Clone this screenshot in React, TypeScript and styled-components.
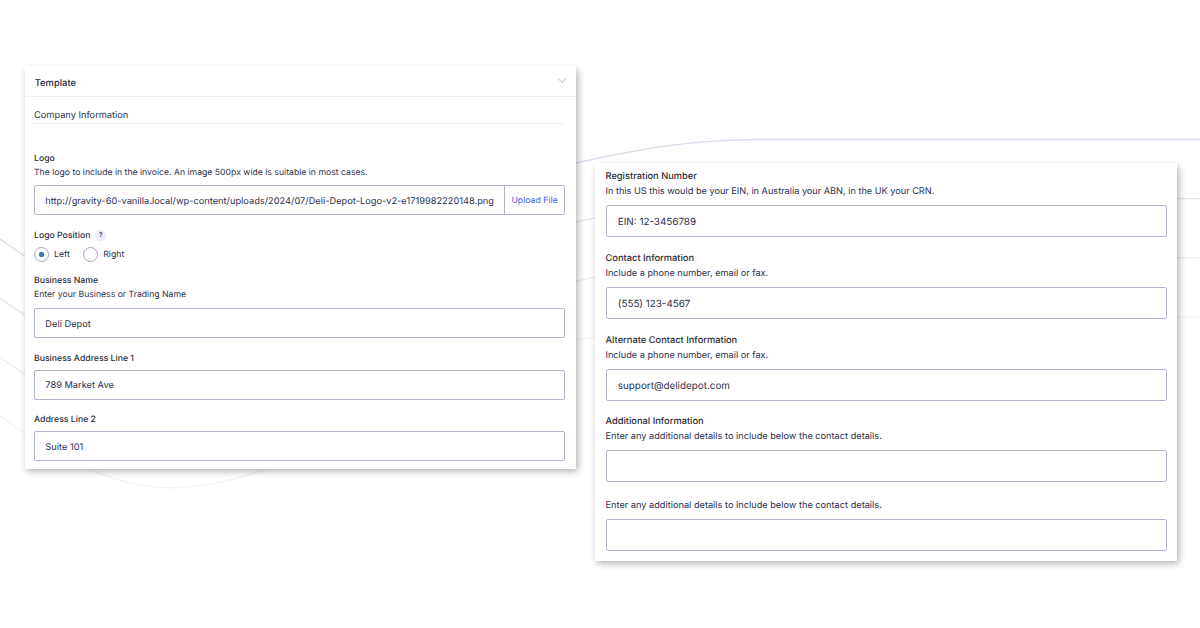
import React from "react";
import styled, { createGlobalStyle } from "styled-components";

const GlobalStyle = createGlobalStyle`
  * { box-sizing: border-box; }
  body {
    margin: 0;
    background: #fff;
    font-family: Inter, "Liberation Sans", sans-serif;
    text-rendering: geometricPrecision;
  }
`;

const Page = styled.main`
  position: relative;
  display: flex;
  align-items: flex-start;
  gap: 18.5px;
  width: 1200px;
  height: 628px;
  padding-left: 25px;
  overflow: hidden;
  background: #fff;
`;

const Waves = styled.svg`
  position: absolute;
  inset: 0;
`;

const Card = styled.section<{ $top: number; $width: number; $height: number }>`
  position: relative;
  flex: none;
  margin-top: ${(p) => p.$top}px;
  width: ${(p) => p.$width}px;
  height: ${(p) => p.$height}px;
  background: #fff;
  box-shadow: 2px 2.5px 7px rgba(0, 0, 0, 0.3);
`;

const CardHeader = styled.header`
  display: flex;
  justify-content: space-between;
  height: 31px;
  padding: 10px 8.7px 0 9.7px;
  border-bottom: 1px solid #ececf2;
`;

const Title = styled.h2`
  margin: 0;
  padding-top: 1px;
  font-size: 9.4px;
  font-weight: 500;
  line-height: 13px;
  color: #262949;
`;

const Chevron = styled.svg`
  display: block;
  width: 10px;
  height: 7px;
  margin-top: 0.5px;
`;

const Body = styled.div<{ $pad: string }>`
  display: flex;
  flex-direction: column;
  padding: ${(p) => p.$pad};
`;

const SectionTitle = styled.h3`
  margin: 0 0 27px;
  height: 17px;
  padding-top: 1px;
  border-bottom: 1px solid #f0f0f4;
  font-size: 9.25px;
  font-weight: 400;
  line-height: 15px;
  color: #2c2f50;
`;

const Field = styled.div<{ $height: number }>`
  display: flex;
  flex-direction: column;
  flex: none;
  height: ${(p) => p.$height}px;
`;

const Label = styled.div<{ $size?: number }>`
  display: flex;
  align-items: center;
  height: 14px;
  padding-top: 2px;
  font-size: ${(p) => p.$size ?? 8.7}px;
  font-weight: 500;
  line-height: 14px;
  white-space: nowrap;
  color: #2b2d38;
`;

const Hint = styled.div<{ $size?: number }>`
  height: 15px;
  padding-top: 1px;
  font-size: ${(p) => p.$size ?? 8.67}px;
  line-height: 15px;
  white-space: nowrap;
  color: #2c2f50;
`;

const Box = styled.div<{ $height?: number; $gap?: number; $size?: number }>`
  display: flex;
  align-items: stretch;
  flex: none;
  height: ${(p) => p.$height ?? 30}px;
  margin-top: ${(p) => p.$gap ?? 6}px;
  border: 1px solid #b4b2d0;
  border-radius: 2px;
  background: #fff;
  font-size: ${(p) => p.$size ?? 9.27}px;
  color: #2c2f50;
`;

const Value = styled.span<{ $pad?: number }>`
  display: flex;
  flex: 1;
  min-width: 0;
  align-items: center;
  padding-top: 2px;
  padding-left: ${(p) => p.$pad ?? 10.3}px;
  white-space: nowrap;
`;

const Upload = styled.button`
  flex: none;
  width: 60px;
  padding: 2px 0 0;
  border: 0;
  border-left: 1px solid #b4b2d0;
  background: #fdfdff;
  font: 400 8.7px Inter, "Liberation Sans", sans-serif;
  text-rendering: inherit;
  color: #3e63e8;
`;

const Help = styled.span`
  display: grid;
  place-items: center;
  width: 11px;
  height: 11px;
  margin: -1px 0 0 5px;
  border-radius: 50%;
  background: #ececf7;
  font-size: 6.5px;
  font-weight: 600;
  line-height: 11px;
  color: #2c2f50;
`;

const Radios = styled.div`
  display: flex;
  gap: 13.5px;
  margin-top: 5px;
`;

const Option = styled.label`
  display: flex;
  align-items: center;
  gap: 5px;
  height: 15px;
  font-size: 8.7px;
  color: #2c2f50;
`;

const Dot = styled.span<{ $on?: boolean }>`
  width: 15px;
  height: 15px;
  border: 1px solid #a3a1c6;
  border-radius: 50%;
  background: ${(p) => (p.$on ? "radial-gradient(circle, #3e7da8 2.4px, #fff 3.1px)" : "#fff")};
`;

const wave =
  "M0 239C60 282 115 310.5 170 310.5C300 310.5 430 190 576 163C640 149 690 139.5 760 139.5H1200";

const waveColors = ["#dddcec", "#e3e3ef", "#ececf2", "#f4f4f6"];

const rightFields = [
  { label: "Registration Number", hint: "In this US this would be your EIN, in Australia your ABN, in the UK your CRN.", value: "EIN: 12-3456789" },
  { label: "Contact Information", hint: "Include a phone number, email or fax.", value: "(555) 123-4567" },
  { label: "Alternate Contact Information", hint: "Include a phone number, email or fax.", value: "support@delidepot.com" },
];

const extraHint = "Enter any additional details to include below the contact details.";

export default function App() {
  return (
    <>
      <GlobalStyle />
      <Page>
        <Waves width="1200" height="628" viewBox="0 0 1200 628" fill="none">
          {waveColors.map((color, i) => (
            <path key={color} d={wave} stroke={color} strokeWidth="1.3" transform={`translate(0 ${i * 59.1})`} />
          ))}
        </Waves>

        <Card $top={66} $width={551} $height={403.4}>
          <CardHeader>
            <Title>Template</Title>
            <Chevron viewBox="0 0 10 7" fill="none">
              <path d="M1.2 1.6L5 5.3L8.8 1.6" stroke="#cfcee3" strokeWidth="1.2" />
            </Chevron>
          </CardHeader>
          <Body $pad="10px 11px 0 9px">
            <SectionTitle>Company Information</SectionTitle>
            <Field $height={77}>
              <Label>Logo</Label>
              <Hint>The logo to include in the invoice. An image 500px wide is suitable in most cases.</Hint>
              <Box $gap={5}>
                <Value>http://gravity-60-vanilla.local/wp-content/uploads/2024/07/Deli-Depot-Logo-v2-e1719982220148.png</Value>
                <Upload>Upload File</Upload>
              </Box>
            </Field>
            <Field $height={45}>
              <Label>
                Logo Position <Help>?</Help>
              </Label>
              <Radios>
                <Option><Dot $on />Left</Option>
                <Option><Dot />Right</Option>
              </Radios>
            </Field>
            <Field $height={77.5}>
              <Label>Business Name</Label>
              <Hint>Enter your Business or Trading Name</Hint>
              <Box>
                <Value>Deli Depot</Value>
              </Box>
            </Field>
            <Field $height={61.5}>
              <Label>Business Address Line 1</Label>
              <Box $gap={5.2}>
                <Value>789 Market Ave</Value>
              </Box>
            </Field>
            <Field $height={61.5}>
              <Label>Address Line 2</Label>
              <Box $gap={5.2}>
                <Value>Suite 101</Value>
              </Box>
            </Field>
          </Body>
        </Card>

        <Card $top={163} $width={582.5} $height={397.6}>
          <Body $pad="6px 10px 0 11px">
            {rightFields.map((f) => (
              <Field key={f.label} $height={81.8}>
                <Label $size={9.3}>{f.label}</Label>
                <Hint $size={9.17}>{f.hint}</Hint>
                <Box $height={32} $gap={7} $size={9.87}>
                  <Value $pad={11.3}>{f.value}</Value>
                </Box>
              </Field>
            ))}
            <Field $height={83}>
              <Label $size={9.3}>Additional Information</Label>
              <Hint $size={9.21}>{extraHint}</Hint>
              <Box $height={32} $gap={7} />
            </Field>
            <Field $height={60}>
              <Hint $size={9.21}>{extraHint}</Hint>
              <Box $height={32} $gap={7} />
            </Field>
          </Body>
        </Card>
      </Page>
    </>
  );
}
